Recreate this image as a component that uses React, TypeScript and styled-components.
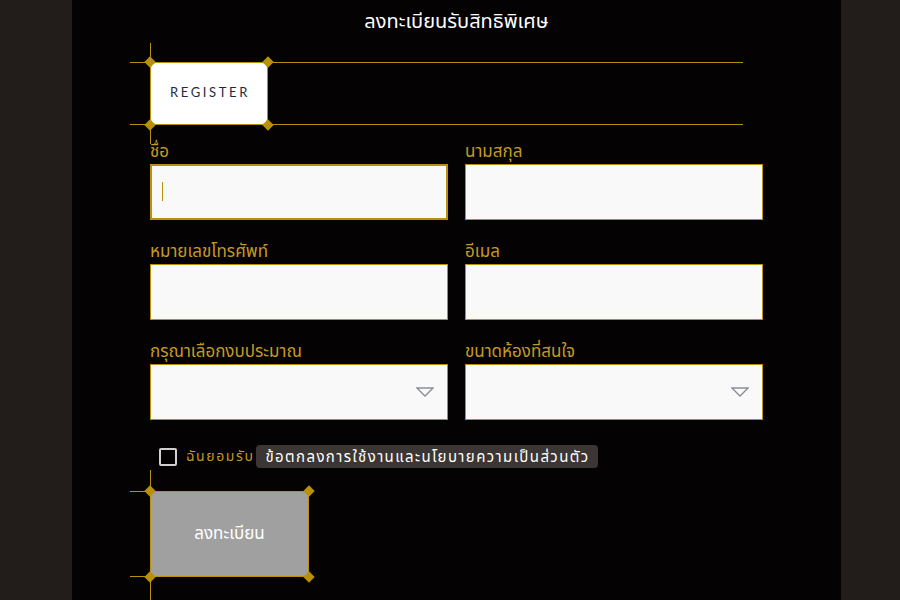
import React from "react";
import styled, { createGlobalStyle } from "styled-components";

const GOLD = "#b8900a";
const LABEL = "#c49a22";

const GlobalStyle = createGlobalStyle`
  html, body {
    margin: 0;
    padding: 0;
    background: #221c1a;
    font-family: "Noto Sans", "Noto Sans Thai", "DejaVu Sans", sans-serif;
  }
`;

const Page = styled.div`
  display: flex;
  padding-left: 72px;
  height: 600px;
  overflow: hidden;
  background: #221c1a;
`;

const Column = styled.main`
  width: 769px;
  background: #040203;
  padding: 0 78px;
  box-sizing: border-box;
`;

const Title = styled.h1`
  margin: 0;
  height: 43px;
  padding-top: 7px;
  box-sizing: border-box;
  text-align: center;
  color: #fff;
  font-size: 20px;
  font-weight: 400;
  line-height: 28px;
`;

const Frame = styled.div<{ $w: number; $h: number }>`
  position: relative;
  width: ${(p) => p.$w}px;
  height: ${(p) => p.$h}px;
`;

const HLine = styled.span<{ $top?: boolean; $len: number }>`
  position: absolute;
  left: -20px;
  width: ${(p) => p.$len}px;
  height: 1px;
  background: ${GOLD};
  ${(p) => (p.$top ? "top: 0;" : "bottom: 0;")}
`;

const VLine = styled.span<{ $above: number; $below: number }>`
  position: absolute;
  left: 0;
  width: 1px;
  top: -${(p) => p.$above}px;
  bottom: -${(p) => p.$below}px;
  background: ${GOLD};
`;

const Diamond = styled.span<{ $x: "l" | "r"; $y: "t" | "b" }>`
  position: absolute;
  width: 8px;
  height: 8px;
  background: ${GOLD};
  transform: rotate(45deg);
  z-index: 2;
  ${(p) => (p.$x === "l" ? "left: -4px;" : "right: -4px;")}
  ${(p) => (p.$y === "t" ? "top: -4px;" : "bottom: -4px;")}
`;

const TabBox = styled.div`
  position: relative;
  z-index: 1;
  height: 100%;
  box-sizing: border-box;
  border: 1px solid ${GOLD};
  border-radius: 6px;
  background: #fff;
  display: flex;
  align-items: center;
  justify-content: center;
  color: #1b2a44;
  font-family: Lato, "Liberation Sans", sans-serif;
  font-size: 13px;
  letter-spacing: 2.6px;
  padding: 0 0 4px 2px;
`;

const SubmitBox = styled.button`
  position: relative;
  z-index: 1;
  width: 100%;
  height: 100%;
  box-sizing: border-box;
  border: 1px solid ${GOLD};
  border-radius: 4px;
  background: #a0a0a0;
  color: #fff;
  font-family: "Noto Sans", "Noto Sans Thai", sans-serif;
  font-size: 17px;
  padding: 0;
  cursor: pointer;
`;

const Corners = () => (
  <>
    <Diamond $x="l" $y="t" />
    <Diamond $x="r" $y="t" />
    <Diamond $x="l" $y="b" />
    <Diamond $x="r" $y="b" />
  </>
);

const TabWrap = styled.div`
  margin-top: 19px;
`;

const Grid = styled.div`
  display: grid;
  grid-template-columns: 1fr 1fr;
  column-gap: 17px;
  row-gap: 20px;
  margin-top: 15px;
`;

const Field = styled.label`
  display: flex;
  flex-direction: column;
  gap: 2px;
`;

const Label = styled.span`
  color: ${LABEL};
  font-size: 17px;
  line-height: 22px;
`;

const InputWrap = styled.div`
  position: relative;
`;

const Input = styled.input<{ $active?: boolean }>`
  display: block;
  width: 100%;
  height: 56px;
  box-sizing: border-box;
  border: ${(p) => (p.$active ? 2 : 1)}px solid ${GOLD};
  background: #f9f9f9;
  font-size: 16px;
  padding: 0 12px;
  outline: none;
  caret-color: ${GOLD};
`;

const Caret = styled.span`
  position: absolute;
  left: 12px;
  top: 18px;
  width: 1px;
  height: 19px;
  background: ${GOLD};
`;

const Select = styled.div`
  display: flex;
  align-items: center;
  justify-content: flex-end;
  height: 56px;
  box-sizing: border-box;
  border: 1px solid ${GOLD};
  background: #f9f9f9;
  padding-right: 13px;
`;

const Agree = styled.div`
  display: flex;
  align-items: center;
  margin-top: 25px;
  padding-left: 9px;
  height: 23px;
`;

const Check = styled.span`
  width: 18px;
  height: 18px;
  box-sizing: border-box;
  border: 2px solid #d0d0d0;
  border-radius: 2px;
  margin-right: 9px;
`;

const AgreeText = styled.span`
  color: ${LABEL};
  font-size: 14px;
  letter-spacing: 1.6px;
  margin-right: 2px;
`;

const Pill = styled.span`
  background: #3b3634;
  color: #fff;
  border-radius: 4px;
  font-size: 15px;
  letter-spacing: 1.4px;
  line-height: 23px;
  padding: 0 9px;
`;

const SubmitWrap = styled.div`
  margin-top: 23px;
`;

const Arrow = () => (
  <svg width="18" height="10" viewBox="0 0 18 10">
    <polygon points="1,1 17,1 9,9" fill="none" stroke="#8a8f96" strokeWidth="1.3" />
  </svg>
);

export default function App() {
  return (
    <Page>
      <GlobalStyle />
      <Column>
        <Title>ลงทะเบียนรับสิทธิพิเศษ</Title>
        <TabWrap>
          <Frame $w={118} $h={63}>
            <HLine $top $len={613} />
            <HLine $len={613} />
            <VLine $above={19} $below={19} />
            <TabBox>REGISTER</TabBox>
            <Corners />
          </Frame>
        </TabWrap>
        <Grid>
          <Field>
            <Label>ชื่อ</Label>
            <InputWrap>
              <Input $active />
              <Caret />
            </InputWrap>
          </Field>
          <Field>
            <Label>นามสกุล</Label>
            <Input />
          </Field>
          <Field>
            <Label>หมายเลขโทรศัพท์</Label>
            <Input />
          </Field>
          <Field>
            <Label>อีเมล</Label>
            <Input />
          </Field>
          <Field>
            <Label>กรุณาเลือกงบประมาณ</Label>
            <Select>
              <Arrow />
            </Select>
          </Field>
          <Field>
            <Label>ขนาดห้องที่สนใจ</Label>
            <Select>
              <Arrow />
            </Select>
          </Field>
        </Grid>
        <Agree>
          <Check />
          <AgreeText>ฉันยอมรับ</AgreeText>
          <Pill>ข้อตกลงการใช้งานและนโยบายความเป็นส่วนตัว</Pill>
        </Agree>
        <SubmitWrap>
          <Frame $w={159} $h={86}>
            <HLine $top $len={20} />
            <HLine $len={20} />
            <VLine $above={21} $below={40} />
            <SubmitBox>ลงทะเบียน</SubmitBox>
            <Corners />
          </Frame>
        </SubmitWrap>
      </Column>
    </Page>
  );
}
